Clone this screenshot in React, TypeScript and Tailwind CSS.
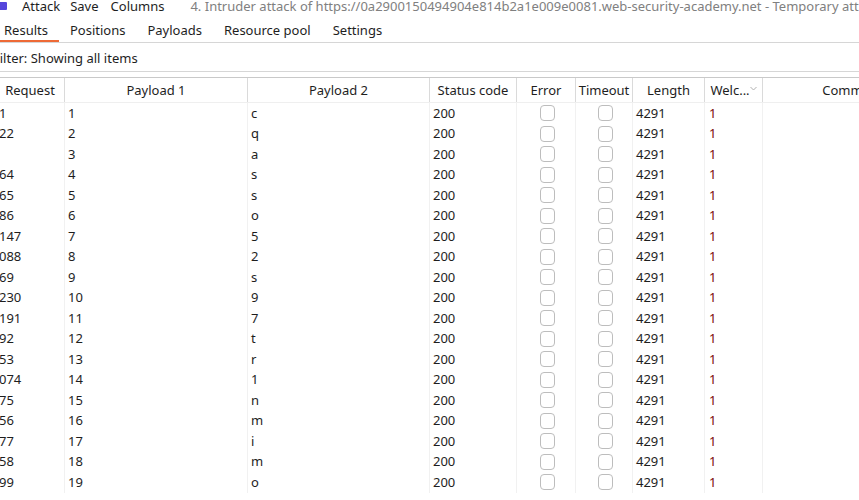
import React from 'react'

const TABS = ['Results', 'Positions', 'Payloads', 'Resource pool', 'Settings']

const ROWS = [
  { req: '1', p1: '1', p2: 'c' },
  { req: '22', p1: '2', p2: 'q' },
  { req: '', p1: '3', p2: 'a' },
  { req: '64', p1: '4', p2: 's' },
  { req: '65', p1: '5', p2: 's' },
  { req: '86', p1: '6', p2: 'o' },
  { req: '147', p1: '7', p2: '5' },
  { req: '088', p1: '8', p2: '2' },
  { req: '69', p1: '9', p2: 's' },
  { req: '230', p1: '10', p2: '9' },
  { req: '191', p1: '11', p2: '7' },
  { req: '92', p1: '12', p2: 't' },
  { req: '53', p1: '13', p2: 'r' },
  { req: '074', p1: '14', p2: '1' },
  { req: '75', p1: '15', p2: 'n' },
  { req: '56', p1: '16', p2: 'm' },
  { req: '77', p1: '17', p2: 'i' },
  { req: '58', p1: '18', p2: 'm' },
  { req: '99', p1: '19', p2: 'o' },
]

const GRID = 'grid grid-cols-[69px_183px_182px_87px_59px_57px_72px_58px_180px]'

function Checkbox() {
  return <div className="w-[15px] h-[16px] rounded-[4px] border border-[#bdbdbd] bg-white" />
}

function HeadCell({ children, className = '' }: { children?: React.ReactNode; className?: string }) {
  return (
    <div className={`h-full flex items-center justify-center pt-[2px] border-r border-[#dadada] whitespace-nowrap ${className}`}>
      {children}
    </div>
  )
}

function Cell({ children, className = '' }: { children?: React.ReactNode; className?: string }) {
  return (
    <div className={`h-full flex items-center pl-[3px] border-r border-[#f1f1f1] whitespace-nowrap ${className}`}>
      {children}
    </div>
  )
}

export default function App() {
  return (
    <div
      className="w-[859px] h-[500px] overflow-hidden bg-white text-[13px] text-[#1e1e1e]"
      style={{ fontFamily: '"Noto Sans", "Open Sans", sans-serif' }}
    >
      {/* top bar */}
      <div className="h-[14px] -mt-[1px] flex items-center leading-[14px] whitespace-nowrap">
        <div className="shrink-0 w-[9px] h-[8px] -ml-[2px] bg-[#5546dc] rounded-[1px]" />
        <span className="shrink-0 ml-[15px]">Attack</span>
        <span className="shrink-0 ml-[10px]">Save</span>
        <span className="shrink-0 ml-[12px]">Columns</span>
        <span className="shrink-0 ml-[26px] text-[#808080]">
          4. Intruder attack of https://0a2900150494904e814b2a1e009e0081.web-security-academy.net - Temporary attack
        </span>
      </div>

      {/* tabs */}
      <div className="h-[30px] flex border-b border-[#d6d6d6]">
        <div className="flex -ml-[7px]">
          {TABS.map((t, i) => (
            <div key={t} className="shrink-0 h-[29px] flex flex-col justify-end px-[11px]">
              <span className="leading-[16px] whitespace-nowrap">{t}</span>
              <div className={`mt-[2px] h-[2px] -mx-[11px] ${i === 0 ? 'bg-[#ee6a36]' : 'bg-transparent'}`} />
            </div>
          ))}
        </div>
      </div>

      {/* filter */}
      <div className="h-[29px] flex items-center pt-[3px] border-b border-[#d6d6d6] whitespace-nowrap">
        <span className="-ml-[7px]">Filter: Showing all items</span>
      </div>

      {/* table */}
      <div className="mt-[5px] border-t border-[#c9c9c9] -ml-[4px]">
        <div className={`${GRID} h-[25px] border-b border-[#efefef]`}>
          <HeadCell>Request</HeadCell>
          <HeadCell>Payload 1</HeadCell>
          <HeadCell>Payload 2</HeadCell>
          <HeadCell>Status code</HeadCell>
          <HeadCell>Error</HeadCell>
          <HeadCell>Timeout</HeadCell>
          <HeadCell>Length</HeadCell>
          <HeadCell className="justify-between pl-[5px] pr-[5px]">
            <span>Welc...</span>
            <svg width="7" height="5" viewBox="0 0 7 5" className="-mt-[6px]">
              <path d="M0.5 1 L3.5 4 L6.5 1" fill="none" stroke="#b0b0b0" strokeWidth="1" />
            </svg>
          </HeadCell>
          <HeadCell>Comment</HeadCell>
        </div>

        {ROWS.map((r, i) => (
          <div key={i} className={`${GRID} h-[20.5px]`}>
            <Cell>{r.req}</Cell>
            <Cell>{r.p1}</Cell>
            <Cell>{r.p2}</Cell>
            <Cell>200</Cell>
            <Cell className="justify-center pl-0">
              <Checkbox />
            </Cell>
            <Cell className="justify-center pl-0">
              <Checkbox />
            </Cell>
            <Cell>4291</Cell>
            <Cell className="pl-[4px] text-[#7d0a0a]">1</Cell>
            <Cell />
          </div>
        ))}
      </div>
    </div>
  )
}
